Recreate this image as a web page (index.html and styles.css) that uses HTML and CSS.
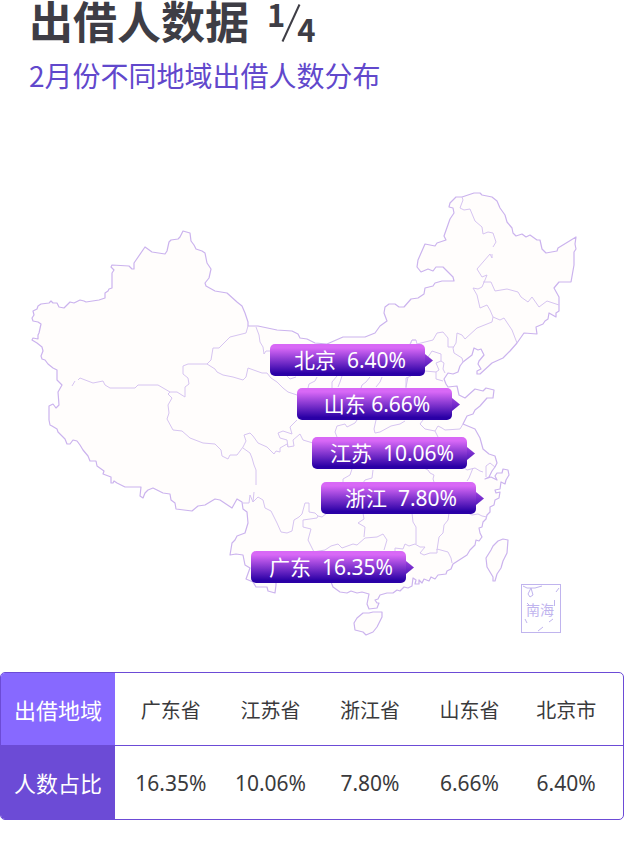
FILE: index.html
```html
<!DOCTYPE html>
<html lang="zh-CN">
<head>
<meta charset="utf-8">
<meta name="viewport" content="width=device-width, initial-scale=1">
<title>出借人数据</title>
<link rel="stylesheet" href="styles.css">
</head>
<body>
<header class="heading">
  <h1 class="title">出借人数据
    <span class="page"><span class="page-now">1</span><svg class="page-slash" viewBox="0 0 20 38" aria-hidden="true"><path d="M18.500 .5L1.500 37.500"/></svg><span class="page-all">4</span></span>
  </h1>
  <p class="subtitle">2月份不同地域出借人数分布</p>
</header>

<main>
<section class="map">
  <svg class="map-art" viewBox="0 100 624 560" aria-hidden="true">
    <g class="land">
      <path d="M57 370L53 368 48 364 45 360 42 359 41 356 43 351 42 347 37 343 32 340 33 338 38 339 38 335 39 333 41 324 38 322 33 321 32 318 34 315 33 311 37 309 38 306 41 304 49 303 51 301 53 303 57 303 59 307 64 308 70 302 74 303 80 300 84 301 86 302 99 300 105 298 105 293 108 291 109 289 112 288 112 273 114 270 111 267 112 265 129 266 132 269 134 269 134 263 145 247 152 252 165 254 167 251 169 242 171 240 178 239 180 237 183 231 190 233 191 241 194 245 196 249 202 251 205 253 207 263 211 269 209 278 205 283 206 286 215 291 227 293 237 302 242 306 245 313 248 322 248 326 258 326 277 330 292 331 298 334 300 338 307 339 315 343 327 344 343 337 365 337 375 333 380 326 387 321 384 313 385 307 389 304 395 304 399 307 404 307 411 299 418 298 424 294 425 288 433 286 435 283 442 281 454 281 453 277 443 267 436 267 433 271 428 269 421 272 417 267 418 260 425 244 435 246 437 243 446 240 444 236 450 219 454 213 453 208 449 207 450 203 456 197 462 197 474 193 480 193 482 195 492 197 497 201 500 208 505 215 507 222 512 228 513 233 516 236 522 234 526 237 530 235 537 240 540 240 542 249 546 253 557 251 558 248 576 237 575 244 576 249 574 252 574 265 571 282 559 282 554 288 559 297 559 311 556 313 556 317 549 313 548 319 545 321 543 324 536 327 537 334 524 333 517 343 510 351 503 358 492 363 480 374 477 374 477 371 481 369 478 364 479 361 484 355 481 349 478 350 474 348 472 355 463 362 460 366 458 372 453 374 448 373 444 379 446 384 448 387 457 386 459 395 465 398 475 389 483 391 486 388 494 390 493 398 487 398 480 406 475 410 473 414 467 416 463 424 475 429 480 438 483 449 489 454 495 456 497 463 495 467 492 471 489 477 485 479 491 477 497 480 495 476 497 473 502 473 503 469 508 470 509 475 506 480 505 484 501 482 500 489 495 490 496 493 500 492 499 498 495 500 494 505 490 507 490 512 487 515 486 519 483 522 482 527 479 528 480 533 482 537 479 541 476 540 475 545 470 550 467 555 453 564 451 569 447 571 446 574 438 575 435 579 431 577 429 581 424 579 422 583 419 580 419 584 415 584 416 580 413 578 412 586 408 588 404 587 400 591 397 590 393 593 387 593 380 595 378 599 375 600 377 603 379 603 377 608 369 609 367 604 369 594 362 592 357 593 351 591 347 593 340 592 333 587 331 582 276 577 276 585 275 593 268 591 267 587 256 587 253 582 246 579 250 568 245 565 243 555 236 554 230 555 232 543 235 540 237 536 245 533 248 523 247 512 243 509 242 502 237 499 232 508 220 500 215 499 205 505 198 506 192 511 176 509 175 503 171 500 170 494 163 493 153 488 148 490 145 493 143 498 140 496 141 487 125 487 117 483 114 481 113 483 111 483 111 477 103 474 104 471 97 466 96 461 90 461 88 456 83 450 80 445 77 441 73 440 70 444 67 444 65 439 58 432 57 429 52 426 50 425 49 420 49 406 53 404 56 408 59 405 58 392 62 385 57 380Z"/>
      <path d="M363 613L369 613 373 612 382 612 382 617 377 627 373 632 366 635 363 632 355 630 354 623 357 618Z"/>
      <path d="M503 539L508 540 507 553 503 561 501 568 497 574 495 581 493 581 493 577 487 567 486 558 491 550 493 546 498 541Z"/>
    </g>
    <g class="borders">
      <path d="M72 386L75 381M78 380L80 378 93 383 103 381 105 385 110 388 135 388 138 385 158 385 170 392 177 392 185 397 185 387 189 384 188 378 183 374 183 366 188 364 207 364 211 360 213 348 219 348 230 337 246 333 248 326"/>
      <path d="M170 392L168 394 172 398 168 405 169 413 167 419 173 430 182 431 190 438 203 443 215 444 221 450 222 456 228 459 230 455 237 455 243 447 246 441 244 435 250 433 253 436 258 443 267 447 274 454 276 451 280 452 280 448 287 444 288 447 287 440 280 438 278 433 283 431 292 434 290 427 297 420M288 447L294 446 293 440 300 434 303 440 313 443"/>
      <path d="M207 364L215 369 217 372 223 375 233 377 243 380 246 377 248 368 262 373 267 373 271 378 277 382 283 388 288 392 297 395"/>
      <path d="M256 327L259 335 260 342 263 347 264 354 266 351 271 351"/>
      <path d="M243 448L250 453 252 458 254 465 256 470 256 485M254 492L253 502 250 495 249 503 242 503M253 502L258 497 263 500 265 508 271 511 277 523 281 532 287 533 292 531 294 520 299 517 302 514 305 503 309 503 309 512 315 513 318 516 317 518 303 520 303 527 311 529 308 540 312 548 314 552"/>
      <path d="M318 516L322 517 327 513 337 512M363 513L364 519 358 523 365 527 364 537"/>
      <path d="M313 552L325 550 331 546 338 544 342 548 353 544 357 545 365 538 377 537 383 534 387 540 384 550M395 551L395 548 403 549 405 544 409 546 415 544 420 547 425 547 420 553 424 555 430 553 437 553 437 549 448 552 451 558 452 563"/>
      <path d="M412 513L413 522 416 527 416 544M449 513L448 520 444 525 443 533 439 537 437 550M468 513L472 515 478 514 482 516 487 517M418 468L424 468 428 470 430 473 434 475 433 479 434 482M473 468L471 473 469 478 467 481M463 467L467 470 475 468 480 471 483 472M486 477L486 466 490 463 495 467"/>
      <path d="M423 420L420 424 425 429 435 431 438 426 442 428 445 430 460 429 463 424M435 431L438 437M405 421L400 424 391 426 380 432 375 433 374 429 376 420M357 420L355 423 347 427 345 424 337 426 335 432 337 437"/>
      <path d="M287 376L290 379 296 377M317 377L315 381 309 384 308 388M337 376L332 382 332 388M342 376L340 382 338 387M370 377L366 382 362 385 361 388M382 377L380 382 376 387M408 377L406 387M352 469L350 475 343 479 343 482M373 470L372 478 365 480 363 483M410 344L412 340 416 340"/>
      <path d="M462 197L463 200 460 208 464 210 470 209 475 221 482 227 483 234 488 232 493 233 496 242 493 247M492 254L492 258 490 254 477 269 482 277 487 275 485 280 482 287 478 289 473 288 477 295 480 308 487 305 490 310 493 317 492 322 477 328 465 339 462 335 457 333 456 343 453 348 454 353 462 358 463 362"/>
      <path d="M483 282L491 282 495 291 507 289 518 292 521 297 528 302 532 297 539 307 547 301 559 305M493 317L500 320 504 318 512 330 517 343"/>
      <path d="M410 345L412 340 416 340 417 344 425 342 433 340 437 333 443 332 448 338 448 347 454 347M428 357L432 351 441 354 441 361 436 363 439 370 436 372 436 379 443 381M441 361L444 363 443 369 445 373M425 371L436 372M406 388L406 378 411 376"/>
    </g>
    <g class="inset">
      <rect x="521.5" y="584.5" width="39" height="48"/>
      <path d="M523 586L527 588 535 588 542 586M531 588L528 594 530 597 533 595 531 588M559 588L556 592M554.500 600V606M525 619L527 623M538 631L543 627M549 622L553 619M527 603L530 606"/>
      <text x="526" y="615">南海</text>
    </g>
  </svg>
  <div class="pin beijing">北京  6.40%</div>
  <div class="pin shandong">山东 6.66%</div>
  <div class="pin jiangsu">江苏  10.06%</div>
  <div class="pin zhejiang">浙江  7.80%</div>
  <div class="pin guangdong">广东  16.35%</div>
</section>

<div class="panel">
  <table class="share">
    <tr class="regions">
      <th scope="row">出借地域</th>
      <td>广东省</td><td>江苏省</td><td>浙江省</td><td>山东省</td><td>北京市</td>
    </tr>
    <tr class="values">
      <th scope="row">人数占比</th>
      <td>16.35%</td><td>10.06%</td><td>7.80%</td><td>6.66%</td><td>6.40%</td>
    </tr>
  </table>
</div>
</main>
</body>
</html>
```
FILE: styles.css
```css
* { box-sizing: border-box; }

body {
  margin: 0;
  background: #fff;
  color: #3a3a3c;
  font-family: "Noto Sans", "Noto Sans CJK SC", sans-serif;
}

.heading { padding: 0 29px; }

.title {
  display: flex;
  align-items: flex-start;
  gap: 18px;
  height: 50px;
  margin: 0;
  color: #3e3d45;
  font: 700 44px/40px "Noto Sans CJK SC", sans-serif;
}

.page {
  display: flex;
  font-size: 31px;
  line-height: 28px;
}

.page-slash {
  width: 20px;
  height: 38px;
  margin: 4px -4px 0;
  fill: none;
  stroke: #3e3d45;
  stroke-width: 2;
}

.page-all { margin-top: 15px; }

.subtitle {
  margin: 0;
  color: #6148cc;
  font-family: "Noto Sans CJK SC", sans-serif;
  font-size: 28px;
  line-height: 50px;
}

.map { position: relative; }

.map-art {
  display: block;
  width: 100%;
  height: auto;
}

.land {
  fill: #fffdfc;
  stroke: #cbb3ee;
  stroke-width: 1.2;
  stroke-linejoin: round;
}

.borders {
  fill: none;
  stroke: #d6c4f1;
  stroke-linejoin: round;
}

.inset {
  fill: none;
  stroke: #c0b4ee;
}

.inset text {
  fill: #c0b4ee;
  stroke: none;
  font: 14px "Noto Sans CJK SC", sans-serif;
}

.pin {
  position: absolute;
  width: 155px;
  height: 32px;
  padding-left: 5px;
  border-radius: 5px;
  background: linear-gradient(#d868f6 12%, #2a00a6 92%);
  color: #fff;
  font-size: 21px;
  line-height: 32px;
  text-align: center;
  white-space: pre;
}

.pin::after {
  content: "";
  position: absolute;
  top: 10px;
  left: 100%;
  width: 8px;
  height: 13px;
  background: linear-gradient(#9a40dc, #5419bc);
  clip-path: polygon(0 0, 100% 50%, 0 100%);
}

.beijing { left: calc(270 / 624 * 100%); top: calc(244 / 560 * 100%); }
.shandong { left: calc(297 / 624 * 100%); top: calc(288 / 560 * 100%); }
.jiangsu { left: calc(312 / 624 * 100%); top: calc(337 / 560 * 100%); }
.zhejiang { left: calc(321 / 624 * 100%); top: calc(382 / 560 * 100%); }
.guangdong { left: calc(251 / 624 * 100%); top: calc(451 / 560 * 100%); }

.panel {
  margin-top: 12px;
  overflow: hidden;
  border: 1px solid #6c4bd6;
  border-radius: 5px;
}

.share {
  width: 100%;
  border-spacing: 0;
  table-layout: fixed;
  text-align: center;
}

.share th,
.share td {
  padding: 0;
}

.regions { height: 72px; }
.values { height: 74px; }

.share th {
  width: 114px;
  background: #6c4bd6;
  color: #fff;
  font-size: 22px;
  font-weight: 400;
}

.regions .regions th,
.share .regions th { background: #8769ff; }
.regions td { font-size: 20px; }
.values td {
  border-top: 1px solid #6c4bd6;
  font-size: 21px;
}

.share td { width: 16%; }
.share td:nth-child(2) { width: 17%; padding-left: 6px; }
.share td:last-child { width: auto; padding-right: 10px; }
```
